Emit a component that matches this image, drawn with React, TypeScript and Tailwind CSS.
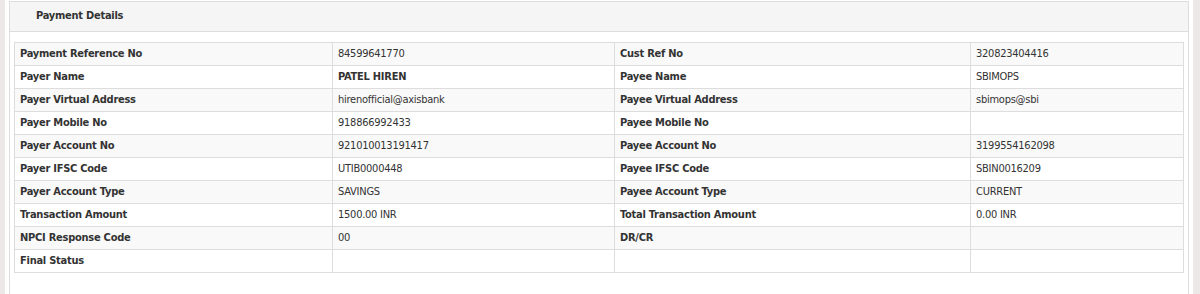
const rows: [string, string, string, string, boolean?][] = [
  ["Payment Reference No", "84599641770", "Cust Ref No", "320823404416"],
  ["Payer Name", "PATEL HIREN", "Payee Name", "SBIMOPS", true],
  ["Payer Virtual Address", "hirenofficial@axisbank", "Payee Virtual Address", "sbimops@sbi"],
  ["Payer Mobile No", "918866992433", "Payee Mobile No", ""],
  ["Payer Account No", "921010013191417", "Payee Account No", "3199554162098"],
  ["Payer IFSC Code", "UTIB0000448", "Payee IFSC Code", "SBIN0016209"],
  ["Payer Account Type", "SAVINGS", "Payee Account Type", "CURRENT"],
  ["Transaction Amount", "1500.00 INR", "Total Transaction Amount", "0.00 INR"],
  ["NPCI Response Code", "00", "DR/CR", ""],
  ["Final Status", "", "", ""],
];

export default function App() {
  return (
    <div className="flex h-[294px] bg-white text-[11px] tracking-[-0.25px] text-[#333] font-['DejaVu_Sans_Condensed','DejaVu_Sans',sans-serif] overflow-hidden">
      <div className="w-[5px] bg-[#ece8e8]" />
      <div className="w-[4px]" />
      <div className="w-[1180px] mt-[1px] border border-[#ddd] border-b-0">
        <div className="h-[30px] bg-[#f5f5f5] border-b border-[#ddd] flex items-center pl-[26px] font-bold">
          Payment Details
        </div>

        <div className="px-[4px] pt-[10px]">
          <div className="grid grid-cols-[318px_282px_356px_1fr] border-t border-l border-[#ddd]">
            {rows.map((r, i) => {
              const bg = i % 2 === 0 ? "bg-[#f9f9f9]" : "bg-white";
              const cell = `h-[23px] border-r border-b border-[#ddd] flex items-center ${bg}`;
              return (
                <div key={i} className="contents">
                  <div className={`${cell} pl-[5px] font-bold`}>{r[0]}</div>
                  <div className={`${cell} pl-[5px] ${r[4] ? "font-bold" : ""}`}>{r[1]}</div>
                  <div className={`${cell} pl-[5px] font-bold`}>{r[2]}</div>
                  <div className={`${cell} pl-[5px]`}>{r[3]}</div>
                </div>
              );
            })}
          </div>
        </div>
      </div>
      <div className="w-[4px]" />
      <div className="flex-1 bg-[#ece8e8]" />
    </div>
  );
}
